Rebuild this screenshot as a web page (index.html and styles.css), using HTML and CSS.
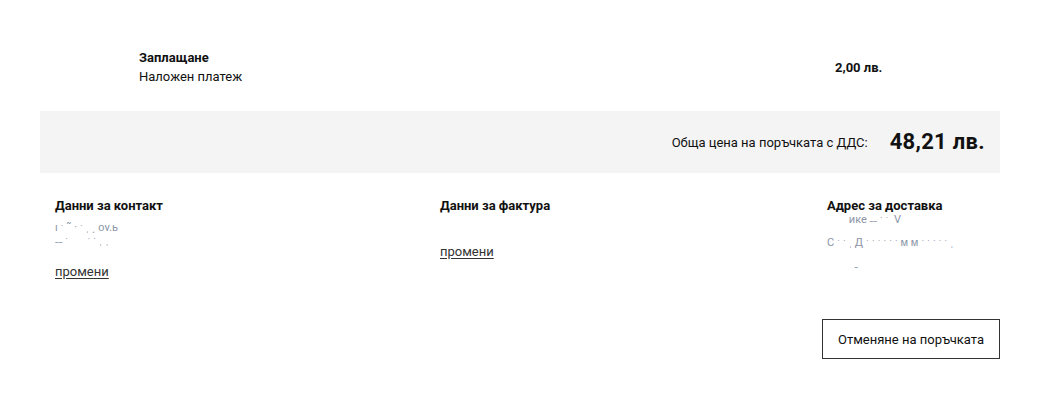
FILE: index.html
```html
<!DOCTYPE html>
<html lang="bg">
<head>
<meta charset="utf-8">
<title>Поръчка</title>
<link rel="stylesheet" href="styles.css">
</head>
<body>
<div class="order">
  <div class="pay-row">
    <div class="pay-info">
      <div class="pay-title">Заплащане</div>
      <div class="pay-method">Наложен платеж</div>
    </div>
    <div class="pay-price">2,00 лв.</div>
  </div>
  <div class="total">
    <span class="total-label">Обща цена на поръчката с ДДС:</span>
    <span class="total-amount">48,21 лв.</span>
  </div>
  <div class="details">
    <div class="col">
      <div class="col-title">Данни за контакт</div>
      <div class="info info-contact">
        <div class="faint">ı ˑ ˜ · ˑ ˌ ͵ ᴏv.ь</div>
        <div class="faint">˗˗ ˑ &nbsp; &nbsp; &nbsp; ˑ ˑ ˌ ˌ</div>
      </div>
      <a class="edit edit-contact" href="#">промени</a>
    </div>
    <div class="col">
      <div class="col-title">Данни за фактура</div>
      <a class="edit edit-invoice" href="#">промени</a>
    </div>
    <div class="col">
      <div class="col-title">Адрес за доставка</div>
      <div class="info info-address">
        <div class="faint">&nbsp; &nbsp; &nbsp; &nbsp; ике ˗˗ ˑ ˑ &nbsp;V</div>
        <div class="faint">С ˑ ˑ ˌ Д ˑ ˑ ˑ ˑ ˑ ˑ ᴍ ᴍ ˑ ˑ ˑ ˑ ˑ ˌ</div>
        <div class="faint">&nbsp; &nbsp; &nbsp; &nbsp; &nbsp; ˗</div>
      </div>
    </div>
  </div>
  <div class="actions">
    <button class="cancel" type="button">Отменяне на поръчката</button>
  </div>
</div>
</body>
</html>
```

FILE: styles.css
```css
html, body {
  margin: 0;
  padding: 0;
  background: #ffffff;
}

body {
  font-family: Roboto, "Liberation Sans", Arial, sans-serif;
  font-size: 13px;
  line-height: 19px;
  color: #111111;
}

.order {
  width: 960px;
  margin-left: 40px;
}

.pay-row {
  display: grid;
  grid-template-columns: 696px 1fr;
  align-items: center;
  padding: 48px 0 25px 99px;
}

.pay-title {
  font-weight: 700;
}

.pay-price {
  font-weight: 700;
}

.total {
  display: flex;
  justify-content: flex-end;
  align-items: center;
  gap: 22px;
  height: 62px;
  padding-right: 15px;
  background: #f4f4f4;
}

.total-label {
  font-size: 13px;
}

.total-amount {
  font-size: 22px;
  font-weight: 700;
  line-height: 26px;
  letter-spacing: 0.3px;
}

.details {
  display: grid;
  grid-template-columns: 385px 387px 1fr;
  padding: 23px 0 0 15px;
}

.col {
  display: flex;
  flex-direction: column;
  align-items: flex-start;
}

.col-title {
  font-weight: 700;
}

.info {
  font-size: 11px;
  line-height: 13px;
}

.info-contact {
  margin-top: 6px;
}

.info-address {
  line-height: 23px;
  margin-top: -7px;
}

.faint {
  color: #8a94a6;
  white-space: pre;
}

.edit {
  color: #333333;
  text-decoration: underline;
  text-underline-offset: 2px;
}

.edit-contact {
  margin-top: 15px;
}

.edit-invoice {
  margin-top: 27px;
}

.actions {
  display: flex;
  justify-content: flex-end;
  margin-top: 38px;
}

.cancel {
  width: 178px;
  height: 40px;
  border: 1px solid #333333;
  background: #ffffff;
  font-family: Roboto, "Liberation Sans", Arial, sans-serif;
  font-size: 13px;
  color: #111111;
  padding: 0;
  cursor: pointer;
}
```
